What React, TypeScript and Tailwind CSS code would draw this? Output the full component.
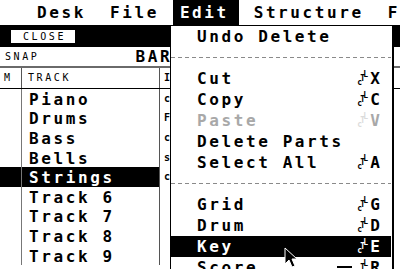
import React from 'react';

const big = "font-['DejaVu_Sans_Mono',monospace] font-bold text-[16px] tracking-[2.6px] leading-none";
const small = "font-['DejaVu_Sans_Mono',monospace] text-[10px] tracking-[2.6px] leading-none";

type Item = { label?: string; keyChar?: string; sep?: boolean; disabled?: boolean; active?: boolean };

const items: Item[] = [
  { label: 'Undo Delete' },
  { sep: true },
  { label: 'Cut', keyChar: 'X' },
  { label: 'Copy', keyChar: 'C' },
  { label: 'Paste', keyChar: 'V', disabled: true },
  { label: 'Delete Parts' },
  { label: 'Select All', keyChar: 'A' },
  { sep: true },
  { label: 'Grid', keyChar: 'G' },
  { label: 'Drum', keyChar: 'D' },
  { label: 'Key', keyChar: 'E', active: true },
  { label: 'Score', keyChar: 'R' },
];

const tracks = [
  { name: 'Piano', inst: 'c' },
  { name: 'Drums', inst: 'F' },
  { name: 'Bass', inst: 'c' },
  { name: 'Bells', inst: 's' },
  { name: 'Strings', inst: 'c', selected: true },
  { name: 'Track 6', inst: '' },
  { name: 'Track 7', inst: '' },
  { name: 'Track 8', inst: '' },
  { name: 'Track 9', inst: '' },
];

// Atari "control" key symbol: little c, T, L stacked diagonally
const CtrlGlyph: React.FC<{ dim?: boolean }> = ({ dim }) => (
  <span className={`relative inline-block w-[12px] h-[15px] font-['DejaVu_Sans_Mono',monospace] font-bold text-[8px] leading-none ${dim ? 'opacity-40' : ''}`}>
    <span className="absolute left-0 top-[8px]">c</span>
    <span className="absolute left-[3px] top-[4px]">T</span>
    <span className="absolute left-[6px] top-0">L</span>
  </span>
);

const MenuRow: React.FC<{ item: Item }> = ({ item }) => {
  if (item.sep) {
    return (
      <div className="h-[21px] flex items-center">
        <div className="w-full h-px bg-[repeating-linear-gradient(90deg,#8a8a8a_0_4px,transparent_4px_7px)]" />
      </div>
    );
  }
  const colour = item.active ? 'bg-black text-white' : item.disabled ? 'text-[#a8a8a8]' : 'text-black';
  return (
    <div className={`h-[21px] flex items-center pl-[26px] pr-[11px] ${colour}`}>
      <span className={big}>{item.label}</span>
      {item.keyChar && (
        <span className="ml-auto flex items-center gap-[1px]">
          <CtrlGlyph dim={item.disabled} />
          <span className={`${big} tracking-normal`}>{item.keyChar}</span>
        </span>
      )}
    </div>
  );
};

export default function App() {
  return (
    <div className="relative w-[400px] h-[269px] overflow-hidden bg-white text-black select-none">
      {/* menu bar */}
      <div className="h-[26px] border-b border-black flex items-center">
        <span className={`${big} ml-[37px]`}>Desk</span>
        <span className={`${big} ml-[24px]`}>File</span>
        <span className={`${big} ml-[14px] w-[70px] h-[25px] pl-[7px] flex items-center bg-black text-white`}>Edit</span>
        <span className={`${big} ml-[15px]`}>Structure</span>
        <span className={`${big} ml-[24px]`}>F</span>
      </div>

      {/* arrange window */}
      <div className="flex flex-col">
        <div className="h-[21px] bg-black flex items-start">
          <div className="ml-[11px] mt-[4px] w-[64px] h-[13px] bg-white flex items-center justify-center">
            <span className={`${small} pl-[3px]`}>CLOSE</span>
          </div>
        </div>
        <div className="h-[19px] flex items-center">
          <span className={`${small} ml-[5px]`}>SNAP</span>
          <span className={`${big} ml-[96px]`}>BAR</span>
        </div>
        <div className="h-[23px] border-t-2 border-[#6a6a6a] border-b border-b-black flex">
          <div className="w-[22px] border-r border-[#555] flex items-center pl-[4px]">
            <span className={small}>M</span>
          </div>
          <div className="w-[138px] border-r border-[#555] flex items-center pl-[6px]">
            <span className={small}>TRACK</span>
          </div>
          <div className="w-[11px] border-r border-[#555] flex items-center pl-[4px]">
            <span className={`${small} font-bold`}>I</span>
          </div>
          <div className="flex-1" />
        </div>
        {tracks.map((t) => (
          <div key={t.name} className="h-[19.6px] flex">
            <div className={`w-[22px] border-r border-[#777] ${t.selected ? 'bg-black' : ''}`} />
            <div className={`w-[138px] border-r border-[#555] flex items-center pl-[7px] pt-[2px] ${t.selected ? 'bg-black text-white' : ''}`}>
              <span className={big}>{t.name}</span>
            </div>
            <div className="w-[11px] border-r border-[#555] flex items-center pl-[4px] overflow-hidden">
              <span className={`${small} font-bold`}>{t.inst}</span>
            </div>
            <div className="flex-1" />
          </div>
        ))}
      </div>

      {/* Edit drop-down menu */}
      <div className="absolute left-[170px] top-[26px] w-[224px] h-[260px] bg-white border-l border-r-2 border-black pr-[1px]">
        {items.map((it, i) => (
          <MenuRow key={i} item={it} />
        ))}
      </div>
      <div className="absolute left-[337px] top-[266px] w-[15px] h-[2px] bg-black" />

      {/* mouse pointer */}
      <svg className="absolute left-[284px] top-[247px]" width="16" height="22" viewBox="0 0 16 22">
        <path d="M1 1 L1 17 L5 13 L8 20 L11 19 L8 12 L13 12 Z" fill="black" stroke="white" strokeWidth="1" />
      </svg>
    </div>
  );
}
